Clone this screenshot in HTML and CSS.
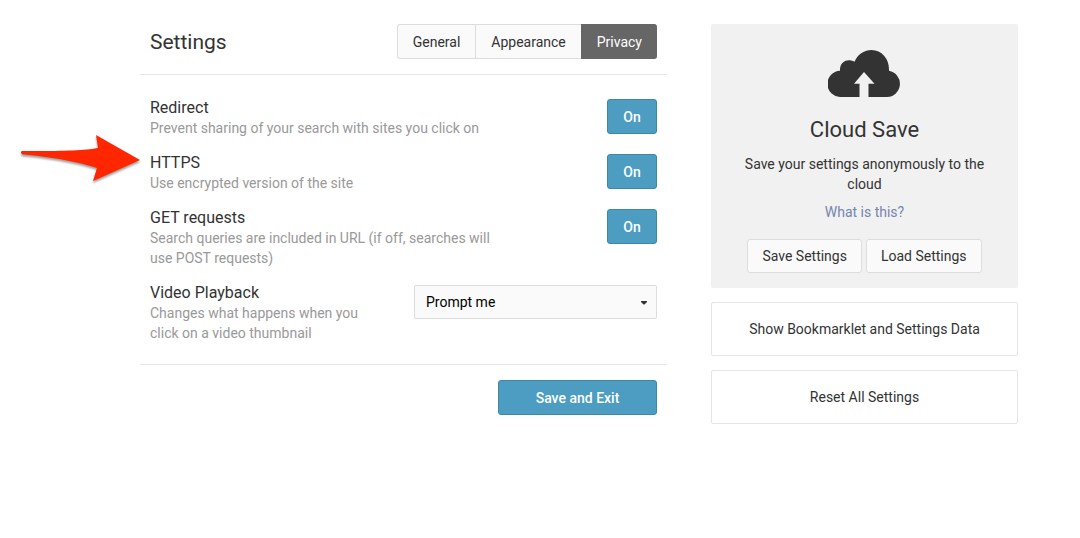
FILE: index.html
```html
<!DOCTYPE html>
<html lang="en">
<head>
<meta charset="utf-8">
<meta name="viewport" content="width=device-width, initial-scale=1">
<title>Settings</title>
<link rel="stylesheet" href="styles.css">
</head>
<body>
<div class="page">
  <main class="settings">
    <header class="settings-header">
      <h1 class="title">Settings</h1>
      <nav class="tabs" aria-label="Settings sections">
        <button type="button" class="tab">General</button>
        <button type="button" class="tab">Appearance</button>
        <button type="button" class="tab tab-active">Privacy</button>
      </nav>
    </header>
    <form class="options">
      <div class="option">
        <div class="option-text">
          <h2 class="option-name" id="redirect">Redirect</h2>
          <p class="option-desc">Prevent sharing of your search with sites you click on</p>
        </div>
        <button type="button" class="toggle" aria-pressed="true" aria-describedby="redirect">On</button>
      </div>
      <div class="option">
        <svg class="pointer" viewBox="0 0 124 52" width="124" height="52" aria-hidden="true">
          <path d="M13 18 L13 18 Z M2.500 18 C40 18.500 70 17.500 79 14.800 L77 2 L121 27 L74 48 L78 35 C63 29.500 28 23 3 21.200 Q1 19.500 2.500 18 Z" fill="#ff2600"/>
        </svg>
        <div class="option-text">
          <h2 class="option-name" id="https">HTTPS</h2>
          <p class="option-desc">Use encrypted version of the site</p>
        </div>
        <button type="button" class="toggle" aria-pressed="true" aria-describedby="https">On</button>
      </div>
      <div class="option">
        <div class="option-text">
          <h2 class="option-name" id="get">GET requests</h2>
          <p class="option-desc">Search queries are included in URL (if off, searches will use POST requests)</p>
        </div>
        <button type="button" class="toggle" aria-pressed="true" aria-describedby="get">On</button>
      </div>
      <div class="option">
        <div class="option-text option-text-narrow">
          <h2 class="option-name"><label for="playback">Video Playback</label></h2>
          <p class="option-desc">Changes what happens when you click on a video thumbnail</p>
        </div>
        <div class="select-wrap">
          <select class="select" id="playback"><option>Prompt me</option></select>
          <svg class="caret" viewBox="0 0 8 4" width="8" height="4" aria-hidden="true"><path d="M1 0 H7 V1 L4.500 3.500 H3.500 L1 1 Z" fill="#333"/></svg>
        </div>
      </div>
    </form>
    <footer class="settings-footer">
      <button type="button" class="save">Save and Exit</button>
    </footer>
  </main>
  <aside class="side">
    <section class="cloud">
      <svg class="cloud-icon" viewBox="0 0 73 47" width="73" height="47" aria-hidden="true">
        <path d="M13 47 A13 13 0 0 1 12 20.800 C11.500 11 20 8 26.500 11.700 C30 4 36.500 0 43.500 0 C54 0 61.500 9 61 20.800 A13.200 13.200 0 0 1 59 47 H40.500 V33.700 H46.500 L36 22 L26 33.700 H31.500 V47 Z" fill="#333"/>
      </svg>
      <h2 class="cloud-title">Cloud Save</h2>
      <p class="cloud-text">Save your settings anonymously to the cloud</p>
      <a class="cloud-link" href="#">What is this?</a>
      <div class="cloud-actions">
        <button type="button" class="light-button">Save Settings</button>
        <button type="button" class="light-button">Load Settings</button>
      </div>
    </section>
    <button type="button" class="side-button">Show Bookmarklet and Settings Data</button>
    <button type="button" class="side-button">Reset All Settings</button>
  </aside>
</div>
</body>
</html>
```
FILE: styles.css
```css
* { box-sizing: border-box; }
body {
  margin: 0;
  background: #fff;
  color: #333;
  font-family: Roboto, "Liberation Sans", sans-serif;
  font-size: 14px;
  line-height: 20px;
}
h1, h2, p { margin: 0; font-weight: 400; }
button, select { font: inherit; color: inherit; margin: 0; cursor: pointer; }
.page {
  display: grid;
  grid-template-columns: 527fr 307fr;
  gap: 44px;
  align-items: start;
  padding: 24px 62px 24px 140px;
}
.settings-header {
  display: flex;
  justify-content: space-between;
  align-items: center;
  padding: 0 10px 15px;
  border-bottom: 1px solid #e5e5e5;
}
.title { font-size: 21px; line-height: 34px; }
.tabs { display: flex; }
.tab {
  height: 35px;
  padding: 0 15px;
  border: 1px solid #ddd;
  border-right-width: 0;
  background: #fafafa;
}
.tab:first-child { border-radius: 3px 0 0 3px; }
.tab-active {
  border-color: #666;
  border-radius: 0 3px 3px 0;
  background: #666;
  color: #fff;
}
.options {
  display: flex;
  flex-direction: column;
  gap: 15px;
  padding: 23px 10px 21px;
}
.option {
  display: flex;
  justify-content: space-between;
  align-items: flex-start;
  position: relative;
}
.option-text { max-width: 360px; }
.option-text-narrow { max-width: 230px; }
.option-name { font-size: 16px; line-height: 20px; }
.option-desc { color: #999; }
.pointer {
  position: absolute;
  left: -131px;
  top: -20px;
  filter: drop-shadow(0 2px 1px rgba(0, 0, 0, .4));
}
.toggle, .save {
  height: 35px;
  margin-top: 1px;
  padding: 0;
  border: 1px solid #3e88a5;
  border-radius: 3px;
  background: #4c9dc1;
  color: #fff;
  font-weight: 500;
}
.toggle { width: 50px; }
.select-wrap { position: relative; width: 243px; margin-top: 2px; }
.select {
  appearance: none;
  width: 100%;
  height: 34px;
  padding: 0 28px 0 11px;
  border: 1px solid #ddd;
  border-radius: 2px;
  background: #fafafa;
  color: #000;
}
.caret { position: absolute; right: 9px; top: 16px; pointer-events: none; }
.settings-footer {
  display: flex;
  justify-content: flex-end;
  padding: 14px 10px;
  border-top: 1px solid #e5e5e5;
}
.save { width: 159px; }
.side { display: flex; flex-direction: column; gap: 14px; }
.cloud {
  display: flex;
  flex-direction: column;
  align-items: center;
  padding: 26px 24px 15px;
  border-radius: 2px;
  background: #f1f1f1;
  text-align: center;
}
.cloud-title { margin: 18px 0 9px; font-size: 22px; line-height: 30px; }
.cloud-link { margin: 8px 0 17px; color: #7485b0; text-decoration: none; }
.cloud-actions { display: flex; gap: 4px; }
.light-button {
  height: 34px;
  padding: 0 14px;
  border: 1px solid #ddd;
  border-radius: 3px;
  background: #fafafa;
}
.side-button {
  height: 54px;
  border: 1px solid #e5e5e5;
  border-radius: 2px;
  background: #fff;
}
```
